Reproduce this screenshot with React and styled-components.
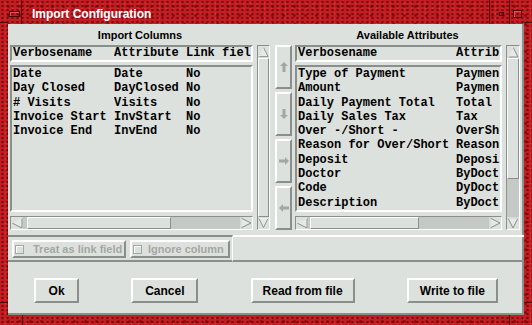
import React from "react";
import styled, { createGlobalStyle, css } from "styled-components";

const BG = "#dde1dd";
const DARK = "#8b8f8b";
const LIGHT = "#ffffff";
const TROUGH = "#c5c9c5";
const GREY_TEXT = "#a3a7a3";
const FRAME_LINE = "#5a0406";

const leftRows = [
  ["Date", "Date", "No"],
  ["Day Closed", "DayClosed", "No"],
  ["# Visits", "Visits", "No"],
  ["Invoice Start", "InvStart", "No"],
  ["Invoice End", "InvEnd", "No"],
];

// the attribute column is narrow, so the toolkit shows clipped values
const rightRows = [
  ["Type of Payment", "Paymen"],
  ["Amount", "Paymen"],
  ["Daily Payment Total", "Total"],
  ["Daily Sales Tax", "Tax"],
  ["Over -/Short -", "OverSh"],
  ["Reason for Over/Short", "Reason"],
  ["Deposit", "Deposi"],
  ["Doctor", "ByDoct"],
  ["Code", "DyDoct"],
  ["Description", "ByDoct"],
];

const GlobalStyle = createGlobalStyle`
  html, body { margin: 0; padding: 0; background: #000; }
  body { font-family: "Liberation Sans", Arial, sans-serif; }
`;

const raised = css`
  border-style: solid;
  border-color: ${LIGHT} ${DARK} ${DARK} ${LIGHT};
`;

const sunken = css`
  border-style: solid;
  border-color: ${DARK} ${LIGHT} ${LIGHT} ${DARK};
`;

const line = (x, y, w, h) =>
  `linear-gradient(${FRAME_LINE}, ${FRAME_LINE}) ${x}px ${y}px / ${w}px ${h}px no-repeat`;

const Frame = styled.div`
  width: 532px;
  height: 325px;
  box-sizing: border-box;
  display: flex;
  flex-direction: column;
  padding: 0 8px 10px;
  background: ${line(21, 0, 1, 24)}, ${line(0, 22, 8, 1)}, ${line(489, 0, 1, 24)},
    ${line(509, 0, 1, 24)}, ${line(524, 22, 8, 1)}, ${line(0, 302, 8, 1)},
    ${line(22, 315, 1, 10)}, ${line(524, 302, 8, 1)}, ${line(509, 315, 1, 10)},
    radial-gradient(circle, rgba(85, 0, 0, 0.7) 0.8px, transparent 1.5px) 0 0 / 5px 4px,
    radial-gradient(circle, rgba(240, 90, 90, 0.35) 0.7px, transparent 1.3px) 2px 1px / 7px 5px,
    radial-gradient(circle, rgba(100, 0, 0, 0.55) 1px, transparent 1.8px) 3px 2px / 11px 9px,
    #c21d22;
`;

const TitleBar = styled.div`
  height: 24px;
  box-sizing: border-box;
  margin: 0 -8px;
  padding: 4px 0 0 9px;
  display: flex;
  align-items: center;
`;

const MenuButton = styled.div`
  width: 11px;
  height: 6px;
  box-sizing: border-box;
  border: 1px solid #4a0002;
  box-shadow: inset 1px 1px 0 #e0585c;
`;

const TitleText = styled.div`
  flex: 1;
  margin-left: 12px;
  color: #fff;
  font: bold 12px/16px "Liberation Sans", Arial, sans-serif;
`;

const IconifyBox = styled.div`
  width: 5px;
  height: 4px;
  box-sizing: border-box;
  border: 1px solid #4a0002;
  margin-right: 9px;
`;

const MaxBox = styled.div`
  width: 9px;
  height: 8px;
  box-sizing: border-box;
  border: 1px solid #4a0002;
  box-shadow: inset 1px 1px 0 #e0585c;
  margin-right: 10px;
`;

const Content = styled.div`
  flex: 1;
  background: ${BG};
  display: flex;
  flex-direction: column;
  box-shadow: inset -2px -2px 0 ${DARK};
`;

const TopSection = styled.div`
  height: 211px;
  flex-shrink: 0;
  display: flex;
  padding: 0 4px 0 2px;
`;

const Column = styled.div`
  width: ${(p) => p.$w}px;
  display: flex;
  flex-direction: column;
`;

const ColumnLabel = styled.div`
  height: 21px;
  text-align: center;
  font: bold 11px/22px "Liberation Sans", Arial, sans-serif;
  color: #000;
`;

const ListArea = styled.div`
  height: 185px;
  display: flex;
  gap: 4px;
`;

const ListPane = styled.div`
  width: ${(p) => p.$w}px;
  display: flex;
  flex-direction: column;
`;

const monoText = css`
  font: bold 12px "Liberation Mono", "Courier New", monospace;
  color: #000;
  white-space: nowrap;
`;

const ListHeader = styled.div`
  height: 17px;
  box-sizing: border-box;
  border-width: 2px;
  ${sunken};
  padding-left: 1px;
  overflow: hidden;
  ${monoText};
  line-height: 13px;
`;

const ListBody = styled.div`
  height: 147px;
  margin-top: 3px;
  box-sizing: border-box;
  border-width: 2px;
  ${sunken};
  padding-left: 1px;
  overflow: hidden;
  ${monoText};
`;

const Row = styled.div`
  display: grid;
  grid-template-columns: ${(p) => p.$cols};
  height: ${(p) => (p.$head ? "13px" : "14.3px")};
  line-height: ${(p) => (p.$head ? "13px" : "14.3px")};
`;

const Cell = styled.span`
  overflow: hidden;
`;

const ScrollBar = styled.div`
  display: flex;
  flex-direction: ${(p) => (p.$vertical ? "column" : "row")};
  box-sizing: border-box;
  border-width: 1px;
  ${sunken};
  background: ${TROUGH};
  flex-shrink: 0;
  ${(p) =>
    p.$vertical
      ? css`
          width: ${p.$w}px;
          height: 100%;
        `
      : css`
          height: 14px;
          margin-top: 4px;
        `}
`;

const ArrowCell = styled.div`
  flex: 0 0 12px;
  display: flex;
  align-items: center;
  justify-content: center;
  background: ${BG};
`;

const Track = styled.div`
  flex: 1;
  display: flex;
  flex-direction: ${(p) => (p.$vertical ? "column" : "row")};
`;

const Thumb = styled.div`
  box-sizing: border-box;
  border-width: 1px;
  ${raised};
  background: ${BG};
  ${(p) =>
    p.$vertical
      ? css`
          height: ${p.$size}px;
          margin-top: ${p.$offset}px;
        `
      : css`
          width: ${p.$size}px;
          margin-left: ${p.$offset}px;
        `}
`;

const arrowShapes = {
  up: { pts: "6,1 11,11 1,11", lit: "1,11 6,1" },
  down: { pts: "1,1 11,1 6,11", lit: "1,1 11,1" },
  left: { pts: "1,6 11,1 11,11", lit: "1,6 11,1" },
  right: { pts: "1,1 11,6 1,11", lit: "1,11 1,1" },
};

const ScrollArrow = ({ dir }) => (
  <ArrowCell>
    <svg width="12" height="12" viewBox="0 0 12 12">
      <polygon points={arrowShapes[dir].pts} fill="#e6eae6" stroke={DARK} strokeWidth="1" />
      <polyline points={arrowShapes[dir].lit} fill="none" stroke={LIGHT} strokeWidth="1" />
    </svg>
  </ArrowCell>
);

const Scroll = ({ vertical, w, size, offset }) => (
  <ScrollBar $vertical={vertical} $w={w}>
    <ScrollArrow dir={vertical ? "up" : "left"} />
    <Track $vertical={vertical}>
      <Thumb $vertical={vertical} $size={size} $offset={offset} />
    </Track>
    <ScrollArrow dir={vertical ? "down" : "right"} />
  </ScrollBar>
);

const MoveColumn = styled.div`
  width: 17px;
  margin: 21px 3px 5px 5px;
  display: flex;
  flex-direction: column;
  gap: 3px;
`;

const MoveButton = styled.div`
  flex: 1;
  box-sizing: border-box;
  border-width: 2px;
  ${raised};
  display: flex;
  align-items: center;
  justify-content: center;
`;

const moveArrows = {
  up: "4,0 8,4 5.5,4 5.5,10 2.5,10 2.5,4 0,4",
  down: "4,10 8,6 5.5,6 5.5,0 2.5,0 2.5,6 0,6",
  right: "10,4 6,0 6,2.5 0,2.5 0,5.5 6,5.5 6,8",
  left: "0,4 4,0 4,2.5 10,2.5 10,5.5 4,5.5 4,8",
};

const MoveArrow = ({ dir }) => {
  const vertical = dir === "up" || dir === "down";
  return (
    <MoveButton>
      <svg width={vertical ? 8 : 10} height={vertical ? 10 : 8} viewBox={vertical ? "0 0 8 10" : "0 0 10 8"}>
        <polygon points={moveArrows[dir]} fill={GREY_TEXT} />
      </svg>
    </MoveButton>
  );
};

const MiddleBar = styled.div`
  height: 27px;
  flex-shrink: 0;
  display: flex;
`;

const OptionGroup = styled.div`
  width: 225px;
  box-sizing: border-box;
  border-style: solid;
  border-width: 2px 1px 2px 0;
  border-color: ${DARK} ${LIGHT} ${DARK} ${DARK};
  padding: 3px 2px 2px 4px;
  display: flex;
  gap: 4px;
`;

const BarFiller = styled.div`
  flex: 1;
  border-top: 2px solid ${LIGHT};
  border-bottom: 2px solid ${DARK};
`;

const OptionButton = styled.div`
  width: ${(p) => p.$w}px;
  height: 18px;
  box-sizing: border-box;
  border-width: 2px;
  ${raised};
  display: flex;
  align-items: center;
  padding-left: 1px;
  color: ${GREY_TEXT};
  font: bold 11px "Liberation Sans", Arial, sans-serif;
  white-space: nowrap;
`;

const CheckSquare = styled.span`
  width: 9px;
  height: 9px;
  box-sizing: border-box;
  border: 1px solid ${GREY_TEXT};
  box-shadow: inset 1px 1px 0 ${LIGHT};
  margin-right: ${(p) => p.$gap}px;
  flex-shrink: 0;
`;

const BottomBar = styled.div`
  flex: 1;
  display: flex;
  justify-content: space-around;
  align-items: flex-start;
  padding-top: 16px;
`;

const Button = styled.div`
  width: ${(p) => p.$w}px;
  height: 25px;
  box-sizing: border-box;
  border-width: 2px;
  ${raised};
  display: flex;
  align-items: center;
  justify-content: center;
  color: #000;
  font: bold 12px "Liberation Sans", Arial, sans-serif;
`;

const LEFT_COLS = "101px 72px 1fr";
const RIGHT_COLS = "158px 1fr";

export default function App() {
  return (
    <>
      <GlobalStyle />
      <Frame>
        <TitleBar>
          <MenuButton />
          <TitleText>Import Configuration</TitleText>
          <IconifyBox />
          <MaxBox />
        </TitleBar>
        <Content>
          <TopSection>
            <Column $w={260}>
              <ColumnLabel>Import Columns</ColumnLabel>
              <ListArea>
                <ListPane $w={243}>
                  <ListHeader>
                    <Row $cols={LEFT_COLS} $head>
                      <Cell>Verbosename</Cell>
                      <Cell>Attribute</Cell>
                      <Cell>Link fiel</Cell>
                    </Row>
                  </ListHeader>
                  <ListBody>
                    {leftRows.map((r) => (
                      <Row key={r[0]} $cols={LEFT_COLS}>
                        {r.map((c, i) => (
                          <Cell key={i}>{c}</Cell>
                        ))}
                      </Row>
                    ))}
                  </ListBody>
                  <Scroll size={144} offset={4} />
                </ListPane>
                <Scroll vertical w={13} size={159} offset={0} />
              </ListArea>
            </Column>
            <MoveColumn>
              <MoveArrow dir="up" />
              <MoveArrow dir="down" />
              <MoveArrow dir="right" />
              <MoveArrow dir="left" />
            </MoveColumn>
            <Column $w={225}>
              <ColumnLabel>Available Attributes</ColumnLabel>
              <ListArea>
                <ListPane $w={207}>
                  <ListHeader>
                    <Row $cols={RIGHT_COLS} $head>
                      <Cell>Verbosename</Cell>
                      <Cell>Attrib</Cell>
                    </Row>
                  </ListHeader>
                  <ListBody>
                    {rightRows.map((r) => (
                      <Row key={r[0]} $cols={RIGHT_COLS}>
                        {r.map((c, i) => (
                          <Cell key={i}>{c}</Cell>
                        ))}
                      </Row>
                    ))}
                  </ListBody>
                  <Scroll size={109} offset={2} />
                </ListPane>
                <Scroll vertical w={14} size={121} offset={0} />
              </ListArea>
            </Column>
          </TopSection>
          <MiddleBar>
            <OptionGroup>
              <OptionButton $w={114}>
                <CheckSquare $gap={9} />
                Treat as link field
              </OptionButton>
              <OptionButton $w={100}>
                <CheckSquare $gap={6} />
                Ignore column
              </OptionButton>
            </OptionGroup>
            <BarFiller />
          </MiddleBar>
          <BottomBar>
            <Button $w={45}>Ok</Button>
            <Button $w={67}>Cancel</Button>
            <Button $w={104}>Read from file</Button>
            <Button $w={91}>Write to file</Button>
          </BottomBar>
        </Content>
      </Frame>
    </>
  );
}
